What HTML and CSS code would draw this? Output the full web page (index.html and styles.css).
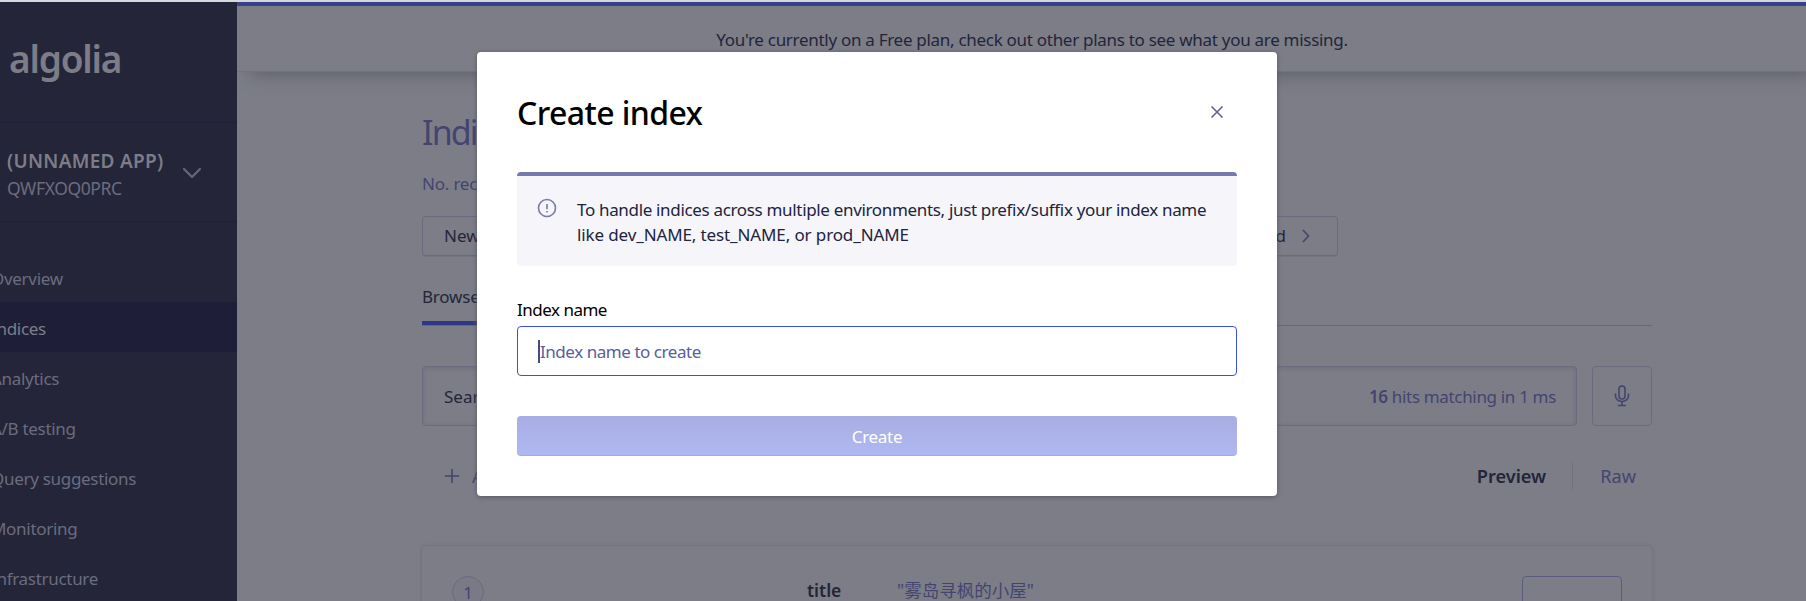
FILE: index.html
```html
<!DOCTYPE html>
<html lang="en">
<head>
<meta charset="utf-8">
<title>Create index</title>
<link rel="stylesheet" href="styles.css">
</head>
<body>
<div class="app">
  <aside class="sidebar">
    <div class="logo"><span>algolia</span></div>
    <div class="account">
      <div>
        <div class="account-name">(UNNAMED APP)</div>
        <div class="account-id">QWFXOQ0PRC</div>
      </div>
      <svg class="account-arrow" width="20" height="12" viewBox="0 0 20 12"><path d="M2 2l8 8 8-8"/></svg>
    </div>
    <nav class="nav">
      <a class="nav-item">Overview</a>
      <a class="nav-item active">Indices</a>
      <a class="nav-item">Analytics</a>
      <a class="nav-item">A/B testing</a>
      <a class="nav-item">Query suggestions</a>
      <a class="nav-item">Monitoring</a>
      <a class="nav-item">Infrastructure</a>
    </nav>
  </aside>
  <main class="main">
    <header class="banner"><span>You're currently on a Free plan, check out other plans to see what you are missing.</span></header>
    <div class="content">
      <h1 class="page-title">Indices</h1>
      <div class="stats">No. records</div>
      <div class="new-bar"><span>New</span><span class="new-end">d<svg width="8" height="14" viewBox="0 0 8 14"><path d="M1 1l5.5 6L1 13"/></svg></span></div>
      <div class="tabs"><span class="tab">Browse</span></div>
      <div class="search-row">
        <div class="search"><span>Search</span><span class="hits"><b>16</b> hits matching in 1 ms</span></div>
        <div class="mic"><svg width="16" height="22" viewBox="0 0 16 22"><rect x="5" y="1" width="6" height="13" rx="3"/><path d="M1.500 8.500v2.500a6.500 5.500 0 0 0 13 0V8.500M8 16.500V20.500M4 20.500h8"/></svg></div>
      </div>
      <div class="toolbar">
        <div class="add"><svg width="14" height="14" viewBox="0 0 14 14"><path d="M7 0v14M0 7h14"/></svg><span>Add</span></div>
        <div class="views"><span class="preview">Preview</span><span class="raw">Raw</span></div>
      </div>
      <div class="card">
        <div class="rank">1</div>
        <div class="key">title</div>
        <div class="value">"雾岛寻枫的小屋"</div>
        <div class="card-action"></div>
      </div>
    </div>
  </main>
</div>
<section class="modal">
  <div class="modal-head">
    <h2 class="modal-title">Create index</h2>
    <svg class="close" width="12" height="12" viewBox="0 0 12 12"><path d="M.5.5l11 11M11.500.5l-11 11"/></svg>
  </div>
  <div class="alert">
    <svg width="20" height="20" viewBox="0 0 20 20"><circle cx="10" cy="10" r="8.500"/><path d="M10 6v5.200M10 13v1.500"/></svg>
    <p><span class="line-a">To handle indices across multiple environments, just prefix/suffix your index name</span><br><span class="line-b">like dev_NAME, test_NAME, or prod_NAME</span></p>
  </div>
  <div class="label">Index name</div>
  <div class="input"><i class="caret"></i><span>Index name to create</span></div>
  <div class="create">Create</div>
</section>
</body>
</html>
```
FILE: styles.css
```css
* { box-sizing: border-box; }
body {
  margin: 0;
  height: 601px;
  overflow: hidden;
  background: #7c7d87;
  color: #23253b;
  font: 17px/24px "Noto Sans", "Noto Sans CJK SC", sans-serif;
}
svg { fill: none; stroke: #434570; stroke-width: 1.6; flex: none; display: block; }
.app { display: grid; grid-template-columns: 237px 1fr; height: 601px; overflow: hidden; border-top: 2px solid #d6d8e1; }

.sidebar { background: #242539; overflow: hidden; color: #6b6c7e; }
.logo { height: 121px; padding: 33px 0 0 9px; border-bottom: 1px solid #1f1f36; color: #7c7d87; font-size: 37px; line-height: 48px; font-weight: 600; letter-spacing: -1.2px; }
.account { height: 99px; padding: 24px 0 0 7px; border-bottom: 1px solid #1f1f36; display: flex; }
.account-name { width: 175px; color: #7c7d87; font-size: 19px; line-height: 28px; font-weight: 600; letter-spacing: 0.3px; white-space: nowrap; }
.account-id { font-size: 17.5px; line-height: 26px; letter-spacing: -0.4px; }
.account-arrow { margin-top: 20px; stroke: #666778; stroke-width: 2.2; stroke-linecap: round; stroke-linejoin: round; }
.nav { padding-top: 30px; }
.nav-item { display: flex; align-items: center; height: 50px; padding-top: 3px; margin-left: -9px; white-space: nowrap; letter-spacing: -0.3px; }
.nav-item.active { background: #1e1e39; color: #7c7d87; padding-left: 9px; margin-left: 0; text-indent: -18px; }

.main { border-top: 4px solid #36408b; min-width: 0; overflow: hidden; }
.banner { height: 65px; margin-right: -20px; display: flex; justify-content: center; padding: 22px 0 0 1px; box-shadow: 0 1px 1px #72737e, 0 15px 20px -14px #555663; letter-spacing: -0.29px; white-space: nowrap; }
.content { margin-left: 185px; width: 1230px; padding-top: 37px; }
.page-title { margin: 0; font-size: 34px; line-height: 48px; font-weight: 400; letter-spacing: -1.9px; color: #434570; }
.stats { margin-top: 16px; color: #434570; letter-spacing: -0.2px; }
.new-bar { margin-top: 20px; width: 916px; height: 40px; border: 1px solid #6b6b80; border-radius: 4px; padding: 0 27px 0 21px; display: flex; align-items: center; justify-content: space-between; box-shadow: 0 1px 0 #74757f; }
.new-end { display: flex; align-items: center; gap: 16px; }
.tabs { height: 70px; padding-top: 29px; border-bottom: 1px solid #676779; }
.tab { display: inline-block; height: 40px; padding-right: 20px; border-bottom: 4px solid #2f3887; letter-spacing: -0.2px; }
.search-row { margin-top: 40px; display: flex; gap: 15px; height: 60px; }
.search { width: 1155px; border: 1px solid #6b6b80; border-radius: 4px; padding: 1px 20px 0 21px; display: flex; align-items: center; justify-content: space-between; box-shadow: inset 0 1px 5px #6d6e7b; }
.hits { color: #434570; white-space: nowrap; letter-spacing: -0.33px; }
.hits b { font-weight: 600; }
.mic { width: 60px; border: 1px solid #6b6b80; border-radius: 4px; display: flex; align-items: center; justify-content: center; }
.toolbar { margin-top: 35px; height: 30px; line-height: 31px; display: flex; justify-content: space-between; padding: 0 16px 0 23px; }
.add { display: flex; align-items: center; gap: 13px; color: #434570; }
.views { display: flex; white-space: nowrap; font-size: 18.2px; }
.preview { font-weight: 600; padding-right: 26px; border-right: 1px solid #717281; }
.raw { padding-left: 27px; color: #434570; }
.card { margin: 54px -1px 0; height: 100px; border: 1px solid #747580; border-radius: 5px; padding: 30px 30px 0; display: grid; grid-template-columns: 355px 90px 1fr 100px; box-shadow: 0 0 3px #757681; }
.rank { width: 32px; height: 32px; border: 1px solid #696a80; border-radius: 50%; text-align: center; line-height: 31px; color: #434570; background: #797a85; }
.key { font-size: 17.5px; font-weight: 600; line-height: 28px; }
.value { font-size: 17.5px; color: #434570; line-height: 28px; white-space: nowrap; }
.card-action { height: 50px; border: 1px solid #5c5c80; border-radius: 4px; }

.modal { position: absolute; left: 477px; top: 52px; width: 800px; height: 444px; padding: 40px; background: #fff; border-radius: 4px; box-shadow: 0 1px 5px #575864; }
.modal-head { display: flex; justify-content: space-between; align-items: center; height: 40px; padding-right: 14px; }
.modal-title { margin: 0; padding-top: 2px; color: #000; font-size: 32px; line-height: 40px; font-weight: 500; letter-spacing: -0.6px; }
.close { stroke: #5a5a99; stroke-width: 1.5; }
.alert { margin-top: 40px; height: 94px; border-top: 4px solid #777aaf; border-radius: 4px; background: #f5f5fa; padding: 21px 20px 0; display: flex; gap: 20px; color: #21243d; line-height: 25px; }
.alert svg { margin-top: 1px; stroke: #777aaf; }
.alert p { margin: 0; white-space: nowrap; }
.line-a { letter-spacing: -0.33px; }
.line-b { letter-spacing: -0.12px; }
.label { margin-top: 31px; height: 23px; color: #000; line-height: 25px; letter-spacing: -0.5px; }
.input { margin-top: 6px; height: 50px; border: 1px solid #3c4fe0; border-radius: 4px; padding: 1px 0 0 20px; display: flex; align-items: center; color: #5a5e9a; letter-spacing: -0.45px; }
.caret { width: 2px; height: 23px; background: #484c7a; }
.create { margin-top: 40px; height: 40px; border-radius: 4px; border-bottom: 1px solid #a5abde; background: linear-gradient(#a8aee2, #b0b8f2); color: #fff; text-align: center; line-height: 41px; letter-spacing: -0.3px; }
```
